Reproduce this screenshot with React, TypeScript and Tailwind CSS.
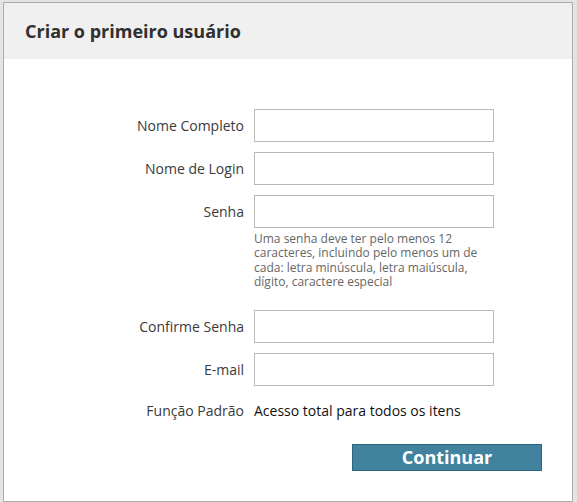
function Field({ label, type = "text" }: { label: string; type?: string }) {
  return (
    <div className="flex items-center">
      <label className="w-[250px] pr-[10px] text-right text-[14px] text-[#3a3a3a]">
        {label}
      </label>
      <input
        type={type}
        className="h-[33px] w-[240px] border border-[#b9b9b9] bg-white px-2 text-[14px] outline-none"
      />
    </div>
  );
}

function App() {
  return (
    <div
      className="h-[502px] w-[577px] bg-[#e4e4e4] pl-[3px] pt-[2px]"
      style={{ fontFamily: '"Open Sans", "Liberation Sans", sans-serif' }}
    >
      <div className="flex h-[500px] w-[570px] flex-col border border-[#ababab] bg-white">
        {/* Header */}
        <div className="flex h-[56px] items-center bg-[#f0f0f0] pl-[21px]">
          <h2 className="text-[18px] font-bold text-[#2f2f2f]">
            Criar o primeiro usuário
          </h2>
        </div>

        {/* Form */}
        <form className="flex flex-col pt-[50px]">
          <div className="flex flex-col gap-[10px]">
            <Field label="Nome Completo" />
            <Field label="Nome de Login" />
            <Field label="Senha" type="password" />
          </div>
          <p className="ml-[250px] mt-[4px] w-[240px] text-[12px] leading-[14.3px] text-[#666]">
            Uma senha deve ter pelo menos 12 caracteres, incluindo pelo menos um de
            cada: letra minúscula, letra maiúscula, dígito, caractere especial
          </p>
          <div className="mt-[21px] flex flex-col gap-[10px]">
            <Field label="Confirme Senha" type="password" />
            <Field label="E-mail" type="email" />
          </div>
          <div className="mt-[14px] flex h-[20px] items-center">
            <span className="w-[250px] pr-[10px] text-right text-[14px] text-[#3a3a3a]">
              Função Padrão
            </span>
            <span className="text-[14px] text-[#111]">
              Acesso total para todos os itens
            </span>
          </div>
          <div className="mt-[24px] flex justify-end pr-[30px]">
            <button
              type="submit"
              className="flex h-[27px] w-[190px] items-center justify-center border border-[#2f657c] bg-[#41829e] pb-[2px] text-[18px] font-bold leading-none text-white"
            >
              Continuar
            </button>
          </div>
        </form>
      </div>
    </div>
  );
}

export default App;
